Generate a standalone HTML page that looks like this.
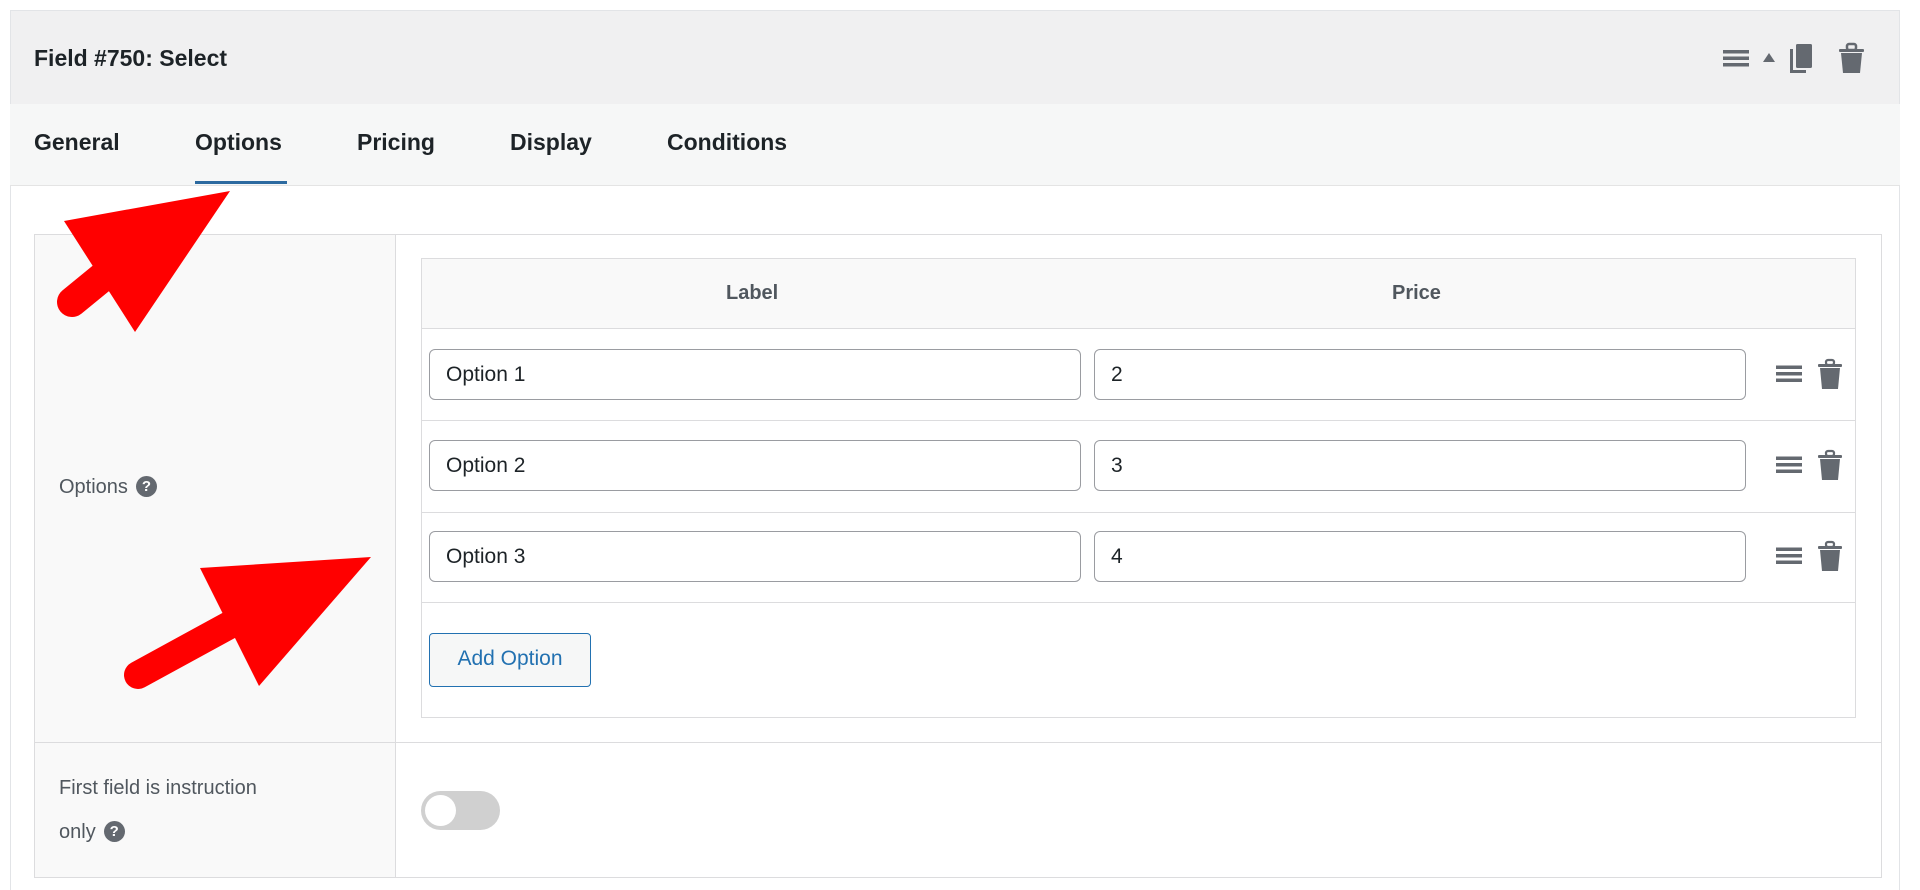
<!DOCTYPE html>
<html><head><meta charset="utf-8"><style>
*{box-sizing:border-box;margin:0;padding:0}
body{width:1920px;height:890px;background:#fff;font-family:"Liberation Sans",sans-serif;position:relative;overflow:hidden;color:#1d2327}
.abs{position:absolute}
.panel{left:10px;top:10px;width:1890px;height:880px;border:1px solid #e2e4e7;border-bottom:none}
.hdr{left:10px;top:10px;width:1890px;height:94px;background:#f0f0f1}
.tabs{left:10px;top:104px;width:1890px;height:82px;background:#f6f7f7;border-bottom:1px solid #e4e4e4}
.tab{top:129px;font-weight:bold;font-size:23px;color:#1d2327}
.ul{left:195px;top:181px;width:92px;height:3px;background:#2c6aa0}
.outer{left:34px;top:234px;width:1848px;height:644px;border:1px solid #dcdcde}
.lcol{left:35px;top:235px;width:361px;height:642px;background:#f9f9f9;border-right:1px solid #dcdcde}
.hline{height:1px;background:#dcdcde}
.lbl{font-size:20px;color:#50575e}
.q{display:inline-block;width:21px;height:21px;border-radius:50%;background:#646970;color:#fff;font-size:15px;font-weight:bold;text-align:center;line-height:21px;vertical-align:2px;margin-left:8px}
.inner{left:421px;top:258px;width:1435px;height:460px;border:1px solid #dcdcde}
.th{left:422px;top:259px;width:1433px;height:70px;background:#f9f9f9;border-bottom:1px solid #dcdcde}
.thx{top:282px;font-weight:bold;font-size:20px;color:#50575e}
.inp{height:51px;border:1.5px solid #9a9ca1;border-radius:6px;background:#fff;font-size:21px;padding:13px 0 0 16px;color:#1d2327}
.btn{left:429px;top:633px;width:162px;height:54px;border:1.5px solid #2271b1;border-radius:4px;background:#f6f7f7;color:#2271b1;font-size:21px;text-align:center;line-height:50px}
</style></head><body>
<div class="abs hdr"></div>
<div class="abs panel"></div>
<div class="abs" style="left:34px;top:45px;font-weight:bold;font-size:23px">Field #750: Select</div>
<svg class="abs" style="left:1708px;top:40px" width="170" height="40" viewBox="0 0 170 40">
<g fill="#646970"><rect x="15" y="10" width="26" height="3.5"/><rect x="15" y="16.5" width="26" height="3.5"/><rect x="15" y="23" width="26" height="3.5"/>
<polygon points="61,13 67,22 55,22"/>
<rect x="88" y="4" width="16" height="24" rx="1.5"/><path d="M85,9 h-3 v24 h16 v-3 h-13 z"/>
<rect x="131" y="9" width="25" height="3" rx="1"/><rect x="139" y="4" width="9" height="6" rx="2" fill="none" stroke="#646970" stroke-width="2.5"/><path d="M133,13 h21 l-2,20 h-17 z"/></g></svg>
<div class="abs tabs"></div>
<div class="abs tab" style="left:34px">General</div>
<div class="abs tab" style="left:195px">Options</div>
<div class="abs tab" style="left:357px">Pricing</div>
<div class="abs tab" style="left:510px">Display</div>
<div class="abs tab" style="left:667px">Conditions</div>
<div class="abs ul"></div>
<div class="abs outer"></div>
<div class="abs lcol"></div>
<div class="abs hline" style="left:35px;top:742px;width:1846px"></div>
<div class="abs lbl" style="left:59px;top:476px">Options<span class="q">?</span></div>
<div class="abs lbl" style="left:59px;top:777px">First field is instruction</div>
<div class="abs lbl" style="left:59px;top:821px">only<span class="q">?</span></div>
<div class="abs inner"></div>
<div class="abs th"></div>
<div class="abs thx" style="left:726px">Label</div>
<div class="abs thx" style="left:1392px">Price</div>
<div class="abs hline" style="left:422px;top:420px;width:1433px"></div>
<div class="abs hline" style="left:422px;top:512px;width:1433px"></div>
<div class="abs hline" style="left:422px;top:602px;width:1433px"></div>
<div class="abs inp" style="left:429px;top:349px;width:652px">Option 1</div>
<div class="abs inp" style="left:1094px;top:349px;width:652px">2</div>
<div class="abs inp" style="left:429px;top:440px;width:652px">Option 2</div>
<div class="abs inp" style="left:1094px;top:440px;width:652px">3</div>
<div class="abs inp" style="left:429px;top:531px;width:652px">Option 3</div>
<div class="abs inp" style="left:1094px;top:531px;width:652px">4</div>
<svg class="abs" style="left:1770px;top:355px" width="80" height="250" viewBox="0 0 80 250">
<defs><g id="ic" fill="#646970"><rect x="6" y="10.5" width="26" height="3.5"/><rect x="6" y="17" width="26" height="3.5"/><rect x="6" y="23.5" width="26" height="3.5"/>
<rect x="48" y="9" width="24" height="3" rx="1"/><rect x="56" y="5" width="8" height="5" rx="2" fill="none" stroke="#646970" stroke-width="2.2"/><path d="M50,13 h20 l-2,21 h-16 z"/></g></defs>
<use href="#ic"/><use href="#ic" y="91"/><use href="#ic" y="182"/></svg>
<div class="abs btn">Add Option</div>
<div class="abs" style="left:421px;top:791px;width:79px;height:39px;border-radius:20px;background:#d0d0d0"></div>
<div class="abs" style="left:425px;top:795px;width:31px;height:31px;border-radius:50%;background:#fff"></div>
<svg class="abs" style="left:0;top:0" width="1920" height="890">
<line x1="72" y1="302" x2="105" y2="275" stroke="#f00" stroke-width="30" stroke-linecap="round"/>
<polygon points="230,191 64,221 135,332" fill="#f00"/>
<line x1="138" y1="675" x2="235" y2="622" stroke="#f00" stroke-width="28" stroke-linecap="round"/>
<polygon points="371,557 200,568 259,686" fill="#f00"/>
</svg>
</body></html>
